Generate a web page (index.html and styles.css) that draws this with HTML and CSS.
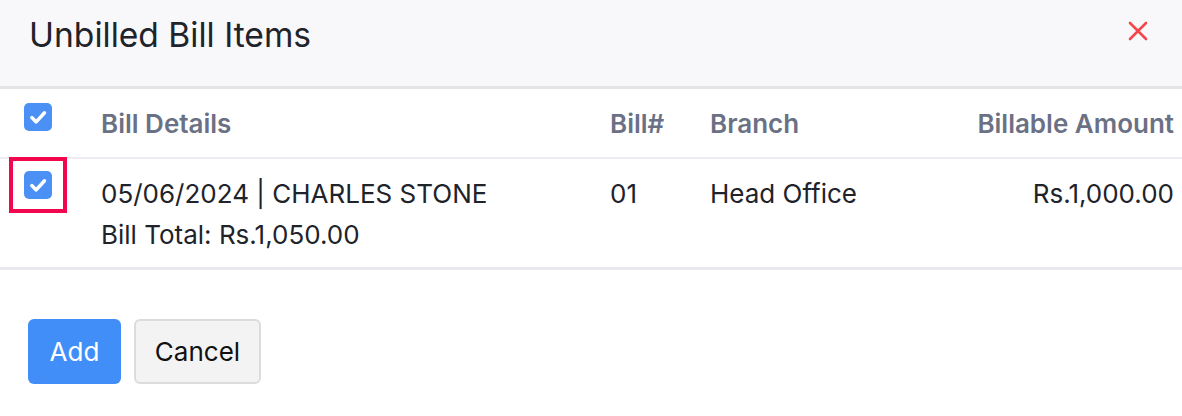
FILE: index.html
```html
<!DOCTYPE html>
<html>
<head>
<meta charset="utf-8">
<link rel="stylesheet" href="styles.css">
</head>
<body>
<div class="modal">
  <div class="modal-header">
    <h1 class="modal-title">Unbilled Bill Items</h1>
    <button class="close-btn" aria-label="Close">
      <svg width="20" height="20" viewBox="0 0 20 20"><path d="M2 2L18 18M18 2L2 18" stroke="#f4474c" stroke-width="2.6" stroke-linecap="round"/></svg>
    </button>
  </div>
  <div class="table">
    <div class="row head-row">
      <div class="cell cb-cell"><span class="checkbox"><svg viewBox="0 0 28 28"><path d="M7.8 14.6L12.2 18.9L20.5 9.8" fill="none" stroke="#fff" stroke-width="3.5" stroke-linecap="round" stroke-linejoin="round"/></svg></span></div>
      <div class="cell">Bill Details</div>
      <div class="cell">Bill#</div>
      <div class="cell">Branch</div>
      <div class="cell right">Billable Amount</div>
    </div>
    <div class="row body-row">
      <div class="cell cb-cell"><span class="highlight"><span class="checkbox"><svg viewBox="0 0 28 28"><path d="M7.8 14.6L12.2 18.9L20.5 9.8" fill="none" stroke="#fff" stroke-width="3.5" stroke-linecap="round" stroke-linejoin="round"/></svg></span></span></div>
      <div class="cell">
        <div>05/06/2024 | CHARLES STONE</div>
        <div>Bill Total: Rs.1,050.00</div>
      </div>
      <div class="cell">01</div>
      <div class="cell">Head Office</div>
      <div class="cell right">Rs.1,000.00</div>
    </div>
  </div>
  <div class="actions">
    <button class="btn btn-primary">Add</button>
    <button class="btn btn-secondary">Cancel</button>
  </div>
</div>
</body>
</html>
```
FILE: styles.css
```css
* { box-sizing: border-box; }
html, body { margin: 0; padding: 0; background: #fff; }
body { font-family: Inter, "Noto Sans", sans-serif; color: #21232a; }
.modal { width: 1182px; }
.modal-header {
  height: 89px;
  background: #f8f8fb;
  border-bottom: 3px solid #e4e4e8;
  display: flex;
  align-items: flex-start;
  justify-content: space-between;
  padding: 0 34px 0 29px;
}
.modal-title {
  margin: 0;
  padding-top: 15px;
  font-size: 33.6px;
  font-weight: 400;
  line-height: 40px;
  color: #21232a;
}
.close-btn {
  background: none; border: 0; padding: 0;
  margin-top: 21px;
  width: 20px; height: 20px;
  display: block;
}
.close-btn svg { display: block; }
.row {
  display: grid;
  grid-template-columns: 77px 509px 100px 1fr auto;
  padding: 0 8px 0 24px;
  font-size: 26px;
}
.head-row {
  height: 70px;
  border-bottom: 2px solid #ebebf1;
  font-weight: 600;
  color: #6b7185;
  align-items: center;
}
.head-row .cb-cell { align-self: start; padding-top: 14px; }
.body-row {
  height: 111px;
  border-bottom: 3px solid #e8e8ee;
  line-height: 41px;
  padding-top: 14px;
}
.cell.right { text-align: right; }
.cb-cell { position: relative; }
.checkbox {
  display: block;
  width: 28px; height: 28px;
  background: #4a90f5;
  border-radius: 5px;
}
.checkbox svg { display: block; width: 28px; height: 28px; }
.body-row .cb-cell { padding-top: 0; }
.highlight {
  position: absolute;
  left: -15px; top: -16px;
  width: 58px; height: 56px;
  border: 4px solid #f2074e;
  display: flex; align-items: center; justify-content: center;
}
.actions {
  display: flex;
  gap: 13px;
  padding: 49px 0 0 28px;
}
.btn {
  font-family: Inter, "Noto Sans", sans-serif;
  font-size: 26px;
  height: 65px;
  border-radius: 6px;
  cursor: pointer;
}
.btn-primary {
  width: 93px;
  background: #428ef8;
  color: #fff;
  border: 0;
}
.btn-secondary {
  width: 127px;
  background: #f3f3f3;
  color: #111;
  border: 2px solid #dcdcdc;
}
```
